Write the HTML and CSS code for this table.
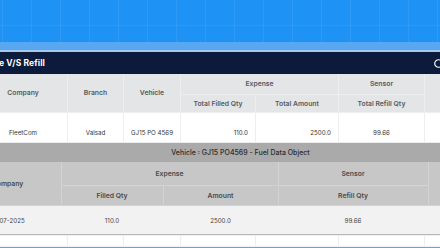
FILE: index.html
```html
<!DOCTYPE html>
<html lang="en">
<head>
<meta charset="utf-8">
<title>Fuel V/S Refill</title>
<link rel="stylesheet" href="styles.css">
</head>
<body>
<div class="backdrop"></div>
<div class="strip"></div>
<div class="modal">
  <div class="modal-head">
    <span class="modal-title">e V/S Refill</span>
    <svg class="close" viewBox="0 0 10 10" aria-hidden="true"><circle cx="5" cy="5" r="4.2" fill="none" stroke="#ffffff" stroke-width="1.3"/></svg>
  </div>
  <table class="report">
    <colgroup>
      <col class="w-company"><col class="w-branch"><col class="w-vehicle"><col class="w-tfq"><col class="w-ta"><col class="w-trq"><col class="w-extra">
    </colgroup>
    <thead>
      <tr class="r1">
        <th rowspan="2">Company</th>
        <th rowspan="2">Branch</th>
        <th rowspan="2">Vehicle</th>
        <th colspan="2">Expense</th>
        <th>Sensor</th>
        <th rowspan="2"></th>
      </tr>
      <tr class="r2">
        <th>Total Filled Qty</th>
        <th>Total Amount</th>
        <th>Total Refill Qty</th>
      </tr>
    </thead>
    <tbody>
      <tr class="row">
        <td>FleetCom</td>
        <td>Valsad</td>
        <td>GJ15 PO 4569</td>
        <td class="num">110.0</td>
        <td class="num">2500.0</td>
        <td>99.66</td>
        <td></td>
      </tr>
      <tr class="detail-row">
        <td class="detail-cell" colspan="7">
          <div class="detail">
            <div class="detail-title">Vehicle : GJ15 PO4569 - Fuel Data Object</div>
            <table class="sub">
              <colgroup>
                <col class="s-company"><col class="s-filled"><col class="s-amount"><col class="s-refill"><col class="s-extra">
              </colgroup>
              <thead>
                <tr class="s1">
                  <th rowspan="2">Company</th>
                  <th colspan="2">Expense</th>
                  <th>Sensor</th>
                  <th rowspan="2"></th>
                </tr>
                <tr class="s2">
                  <th>Filled Qty</th>
                  <th>Amount</th>
                  <th>Refill Qty</th>
                </tr>
              </thead>
              <tbody>
                <tr>
                  <td>01-07-2025</td>
                  <td>110.0</td>
                  <td>2500.0</td>
                  <td>99.66</td>
                  <td></td>
                </tr>
              </tbody>
            </table>
          </div>
        </td>
      </tr>
      <tr class="gap">
        <td></td><td></td><td></td><td></td><td></td><td></td><td></td>
      </tr>
    </tbody>
  </table>
</div>
</body>
</html>
```
FILE: styles.css
```css
* { box-sizing: border-box; }
html, body { margin: 0; padding: 0; }
body {
  width: 440px;
  height: 248px;
  overflow: hidden;
  background: #5ea9ee;
  font-family: Inter, "Noto Sans", sans-serif;
}
.backdrop {
  height: 42px;
  background-color: #1f92f5;
  background-image:
    linear-gradient(90deg, rgba(255,255,255,0.07) 1px, transparent 1px),
    linear-gradient(180deg, rgba(255,255,255,0.06) 1px, transparent 1px);
  background-size: 29px 100%, 100% 29px;
  background-position: 2px 0, 0 25px;
}
.strip {
  height: 10px;
  background: #58a7f1;
  border-bottom: 2px solid #a9c9ea;
}
.modal {
  width: 480px;
  margin-left: -22px;
  background: #ffffff;
}
.modal-head {
  height: 22px;
  background: #0c1a3b;
  color: #ffffff;
  display: flex;
  align-items: center;
  justify-content: space-between;
  padding: 0 15px 0 21px;
}
.modal-title {
  font-size: 8.5px;
  font-weight: 700;
  letter-spacing: 0.1px;
}
.close { width: 9px; height: 9px; display: block; }

.report {
  width: 480px;
  table-layout: fixed;
  border-collapse: collapse;
}
.w-company { width: 89px; }
.w-branch { width: 56px; }
.w-vehicle { width: 57px; }
.w-tfq { width: 75px; }
.w-ta { width: 83px; }
.w-trq { width: 86px; }
.w-extra { width: 34px; }

.report th, .report td {
  padding: 0;
  border: 1px solid #eeeef0;
  text-align: center;
  white-space: nowrap;
}
.report thead tr:first-child th { border-top: none; }
.report thead th {
  background: #e4e5e7;
  color: #555a60;
  font-size: 6.8px;
  font-weight: 600;
}
.report .r1 { height: 20px; }
.report .r2 { height: 18px; }
.report .row td {
  height: 30px;
  padding-top: 10px;
  font-size: 6.2px;
  color: #333333;
  background: #ffffff;
}
.report .row td.num { text-align: right; padding-right: 7px; }

.report td.detail-cell {
  padding: 0;
  border: none;
  height: 93px;
  background: #ffffff;
  vertical-align: top;
}
.detail {
  margin-left: -25px;
  width: 574px;
}
.detail-title {
  height: 19px;
  background: #aaaaaa;
  color: #2b2b2b;
  font-size: 7px;
  font-weight: 500;
  display: flex;
  align-items: center;
  justify-content: center;
}
.sub {
  width: 574px;
  table-layout: fixed;
  border-collapse: collapse;
}
.s-company { width: 107px; }
.s-filled { width: 102px; }
.s-amount { width: 115px; }
.s-refill { width: 150px; }
.s-extra { width: 100px; }
.report .sub th {
  background: #c7c7c7;
  color: #4a4a4a;
  font-size: 6.8px;
  font-weight: 600;
  border: 1px solid #d3d3d3;
}
.report .sub tr.s1 th { border-top: none; }
.sub .s1 { height: 24px; }
.sub .s2 { height: 20px; }
.report .sub td {
  height: 29px;
  background: #f2f2f2;
  color: #444444;
  font-size: 6.2px;
  border: none;
  border-bottom: 1px solid #b9b9b9;
}
.report .gap td {
  height: 11px;
  background: #ffffff;
}
```
